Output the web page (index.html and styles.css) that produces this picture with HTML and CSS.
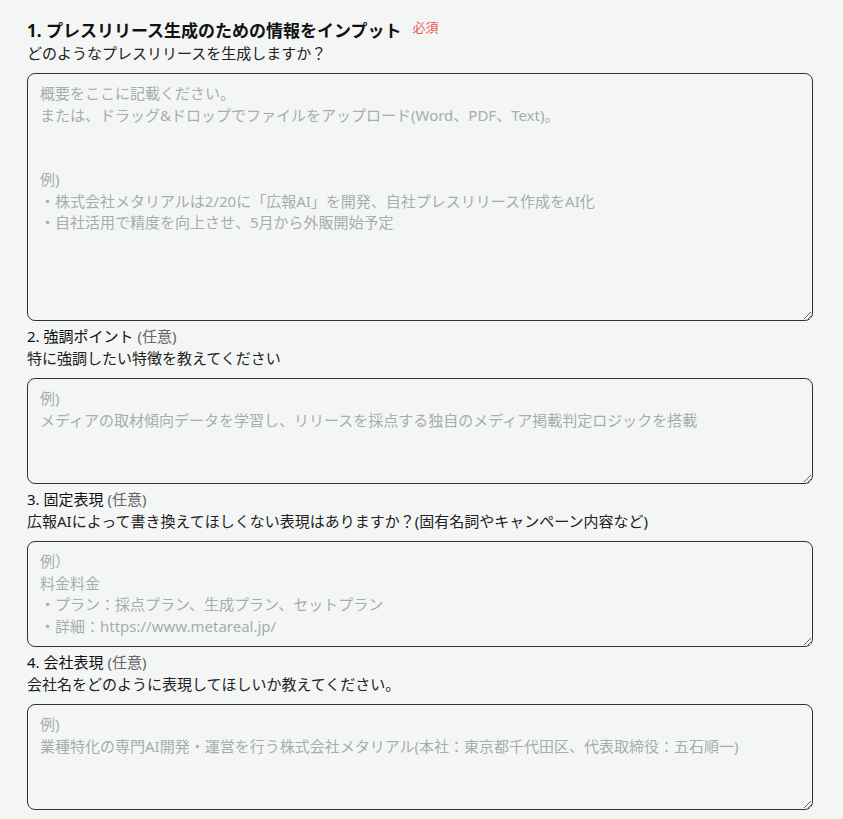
FILE: index.html
```html
<!DOCTYPE html>
<html lang="ja">
<head>
    <meta charset="UTF-8">
    <meta name="viewport" content="width=device-width, initial-scale=1.0">
    <title>プレスリリース生成</title>
    <link rel="stylesheet" href="styles.css">
</head>
<body>
    <form class="input-form">
        <div class="field field-main">
            <h2 class="field-title">1. プレスリリース生成のための情報をインプット<span class="required">必須</span></h2>
            <p class="field-desc">どのようなプレスリリースを生成しますか？</p>
            <textarea class="field-input input-overview" placeholder="概要をここに記載ください。&#10;または、ドラッグ&amp;ドロップでファイルをアップロード(Word、PDF、Text)。&#10;&#10;&#10;例)&#10;・株式会社メタリアルは2/20に「広報AI」を開発、自社プレスリリース作成をAI化&#10;・自社活用で精度を向上させ、5月から外販開始予定"></textarea>
        </div>

        <div class="field">
            <label class="field-label">2. 強調ポイント <span class="optional">(任意)</span></label>
            <p class="field-desc">特に強調したい特徴を教えてください</p>
            <textarea class="field-input" placeholder="例)&#10;メディアの取材傾向データを学習し、リリースを採点する独自のメディア掲載判定ロジックを搭載"></textarea>
        </div>

        <div class="field">
            <label class="field-label">3. 固定表現 <span class="optional">(任意)</span></label>
            <p class="field-desc">広報AIによって書き換えてほしくない表現はありますか？(固有名詞やキャンペーン内容など)</p>
            <textarea class="field-input" placeholder="例）&#10;料金料金&#10;・プラン：採点プラン、生成プラン、セットプラン&#10;・詳細：https://www.metareal.jp/"></textarea>
        </div>

        <div class="field">
            <label class="field-label">4. 会社表現 <span class="optional">(任意)</span></label>
            <p class="field-desc">会社名をどのように表現してほしいか教えてください。</p>
            <textarea class="field-input" placeholder="例)&#10;業種特化の専門AI開発・運営を行う株式会社メタリアル(本社：東京都千代田区、代表取締役：五石順一)"></textarea>
        </div>
    </form>
</body>
</html>
```

FILE: styles.css
```css
body {
    margin: 0;
    background-color: #f4f6f5;
    color: #1f1f1f;
    font-family: "Noto Sans", "Noto Sans CJK JP", sans-serif;
}

.input-form {
    width: 786px;
    padding: 20px 0 0 27px;
}

.field {
    margin-top: 4px;
}

.field-main {
    margin-top: 0;
}

.field-title {
    margin: 0;
    font-size: 17px;
    line-height: 22px;
    font-weight: bold;
    color: #111;
}

.required {
    position: relative;
    top: -5px;
    margin-left: 11px;
    font-size: 13px;
    line-height: 1;
    font-weight: normal;
    color: #ef5757;
}

.field-label {
    display: block;
    font-size: 15px;
    line-height: 22px;
    color: #111;
}

.optional {
    color: #666;
}

.field-desc {
    margin: 0;
    font-size: 15px;
    line-height: 22px;
    color: #222;
}

.field-input {
    display: block;
    box-sizing: border-box;
    width: 786px;
    height: 106px;
    margin-top: 9px;
    padding: 9px 12px 8px;
    border: 1.5px solid #333;
    border-radius: 8px;
    background-color: #f4f6f5;
    font-family: inherit;
    font-size: 15px;
    line-height: 21.5px;
    color: #222;
}

.field-input::placeholder {
    color: #a5adad;
}

.input-overview {
    height: 248px;
}
```
